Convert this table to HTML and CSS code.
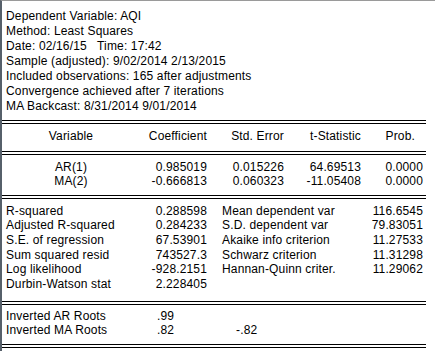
FILE: index.html
```html
<!DOCTYPE html>
<html>
<head>
<meta charset="utf-8">
<link rel="stylesheet" href="styles.css">
</head>
<body>
<div class="panel">
  <div class="info">
    <div>Dependent Variable: AQI</div>
    <div>Method: Least Squares</div>
    <div>Date: 02/16/15&nbsp;&nbsp; Time: 17:42</div>
    <div>Sample (adjusted): 9/02/2014 2/13/2015</div>
    <div>Included observations: 165 after adjustments</div>
    <div>Convergence achieved after 7 iterations</div>
    <div>MA Backcast: 8/31/2014 9/01/2014</div>
  </div>
  <div class="rule"></div>
  <div class="coef thead">
    <div class="c-var">Variable</div>
    <div>Coefficient</div>
    <div>Std. Error</div>
    <div>t-Statistic</div>
    <div class="c-prob">Prob.</div>
  </div>
  <div class="rule"></div>
  <div class="coef tbody">
    <div class="c-var">AR(1)</div>
    <div>0.985019</div>
    <div>0.015226</div>
    <div>64.69513</div>
    <div>0.0000</div>
    <div class="c-var">MA(2)</div>
    <div>-0.666813</div>
    <div>0.060323</div>
    <div>-11.05408</div>
    <div>0.0000</div>
  </div>
  <div class="rule"></div>
  <div class="stats">
    <div>R-squared</div><div class="num">0.288598</div><div class="l2">Mean dependent var</div><div class="num">116.6545</div>
    <div>Adjusted R-squared</div><div class="num">0.284233</div><div class="l2">S.D. dependent var</div><div class="num">79.83051</div>
    <div>S.E. of regression</div><div class="num">67.53901</div><div class="l2">Akaike info criterion</div><div class="num">11.27533</div>
    <div>Sum squared resid</div><div class="num">743527.3</div><div class="l2">Schwarz criterion</div><div class="num">11.31298</div>
    <div>Log likelihood</div><div class="num">-928.2151</div><div class="l2">Hannan-Quinn criter.</div><div class="num">11.29062</div>
    <div>Durbin-Watson stat</div><div class="num">2.228405</div><div class="l2"></div><div class="num"></div>
  </div>
  <div class="rule"></div>
  <div class="roots">
    <div>Inverted AR Roots</div><div>.99</div><div></div>
    <div>Inverted MA Roots</div><div>.82</div><div>-.82</div>
  </div>
  <div class="rule"></div>
</div>
</body>
</html>
```

FILE: styles.css
```css
html, body {
  margin: 0;
  padding: 0;
  background: #ffffff;
}

body {
  font-family: "Liberation Sans", Arial, sans-serif;
  font-size: 12px;
  letter-spacing: 0.15px;
  color: #000000;
}

.panel {
  width: 435px;
  height: 351px;
  border-top: 1px solid #9a9a9a;
  border-left: 2px solid #56606a;
  padding-top: 8px;
  box-sizing: border-box;
  overflow: hidden;
}

.info {
  padding-left: 4px;
  line-height: 15px;
  white-space: nowrap;
}

.rule {
  width: 424px;
  height: 2px;
  border-top: 1px solid #000;
  border-bottom: 1px solid #000;
}

.info + .rule {
  margin-top: 6px;
}

.coef {
  width: 424px;
  display: grid;
  grid-template-columns: 138px 67px 77px 77px 62px;
  line-height: 14.67px;
  white-space: nowrap;
}

.coef > div {
  text-align: right;
}

.coef > .c-var {
  text-align: center;
}

.coef > .c-prob {
  padding-right: 8px;
}

.thead {
  padding-top: 5px;
  padding-bottom: 7px;
}

.tbody {
  padding-top: 5px;
  padding-bottom: 6px;
}

.stats {
  display: grid;
  grid-template-columns: 120px 81px 145px 71px;
  padding: 4.5px 0 9.5px 4px;
  line-height: 14.67px;
  white-space: nowrap;
}

.stats .num {
  text-align: right;
}

.stats .l2 {
  padding-left: 15px;
}

.roots {
  display: grid;
  grid-template-columns: 151px 79px 1fr;
  padding: 3.5px 0 6.2px 4px;
  line-height: 14.67px;
  white-space: nowrap;
}
```
